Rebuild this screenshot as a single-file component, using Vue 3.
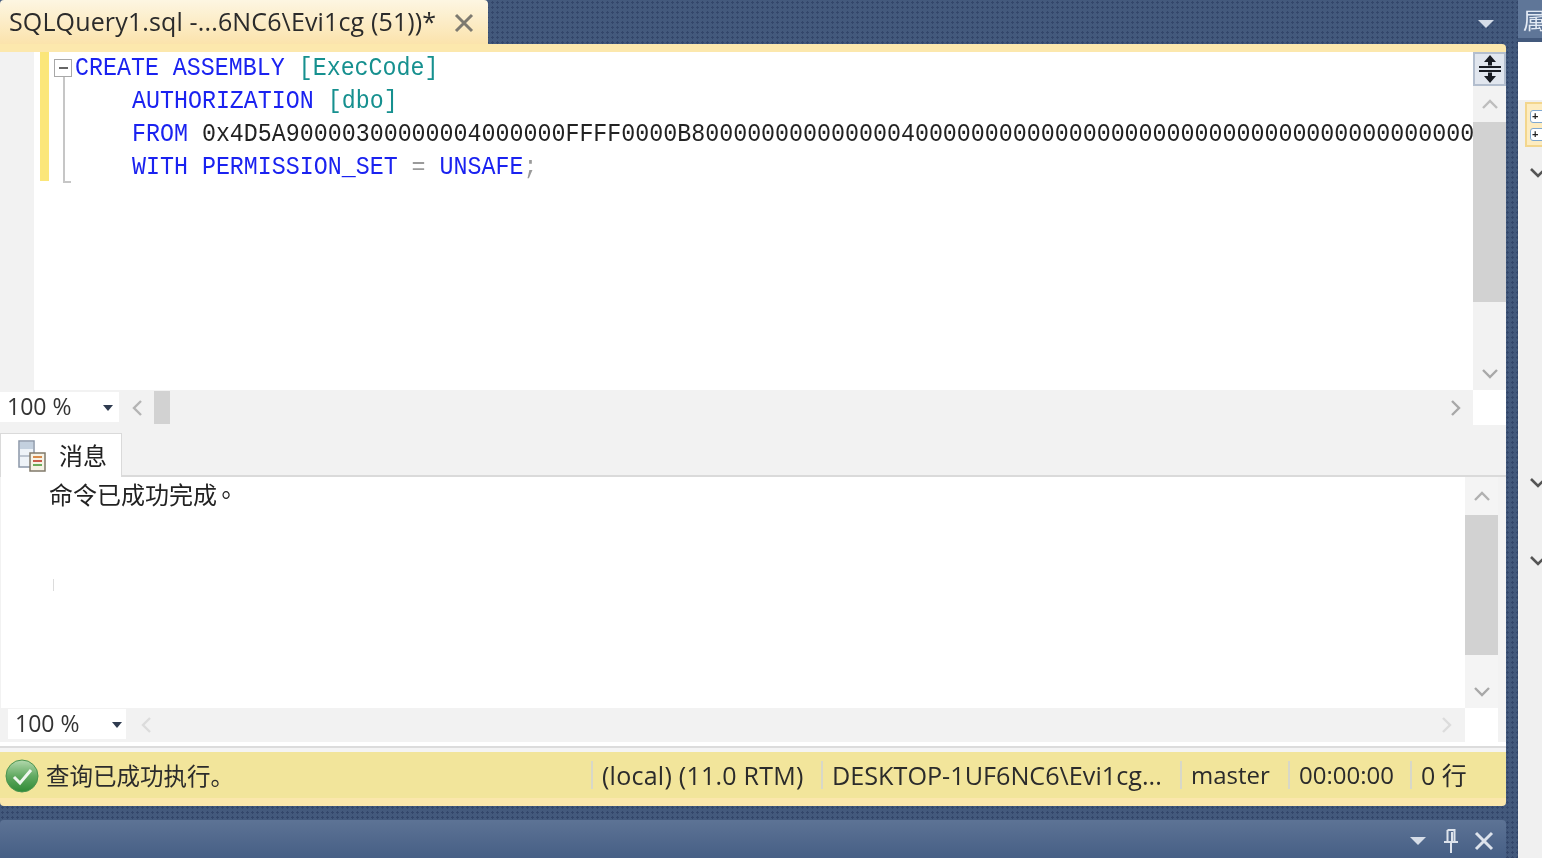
<script setup>
const hex = '0x4D5A90000300000004000000FFFF0000B800000000000000400000000000000000000000000000000000000000000000000000000000000000000000'
const statusCells = [
  { text: '(local) (11.0 RTM)', cls: 'c1' },
  { text: 'DESKTOP-1UF6NC6\\Evi1cg...', cls: 'c2' },
  { text: 'master', cls: 'c3' },
  { text: '00:00:00', cls: 'c4' },
  { text: '0 行', cls: 'c5' }
]
</script>

<template>
  <div class="app">
    <div class="main">
      <div class="tabstrip">
        <div class="tab">
          <span class="tabtext">SQLQuery1.sql -...6NC6\Evi1cg (51))*</span>
          <svg class="tabx" width="20" height="20" viewBox="0 0 20 20"><path d="M2 2L18 18M18 2L2 18" stroke="#7d7a70" stroke-width="3" fill="none"/></svg>
        </div>
        <svg class="droptri" width="16" height="8" viewBox="0 0 16 8"><path d="M0 0H16L8 8Z" fill="#d6dde8"/></svg>
      </div>
      <div class="goldbar"></div>

      <div class="editor">
        <div class="gutter"></div>
        <div class="change"></div>
        <div class="fold">
          <div class="foldbox"><span class="foldminus"></span></div>
          <div class="foldline"></div>
          <div class="foldfoot"></div>
        </div>
        <div class="code">
          <div class="ln"><span class="kw">CREATE ASSEMBLY </span><span class="id">[ExecCode]</span></div>
          <div class="ln ind"><span class="kw">AUTHORIZATION </span><span class="id">[dbo]</span></div>
          <div class="ln ind"><span class="kw">FROM </span><span class="bk">{{ hex }}</span></div>
          <div class="ln ind"><span class="kw">WITH PERMISSION_SET </span><span class="gr">=</span><span class="kw"> UNSAFE</span><span class="gr">;</span></div>
        </div>
        <div class="vbar">
          <div class="split">
            <svg width="26" height="28" viewBox="0 0 26 28"><path d="M13 0L7 7H11V10.5H15V7H19ZM13 28L7 21H11V17.5H15V21H19Z" fill="#181b22"/><path d="M2 12H24M2 16H24" stroke="#181b22" stroke-width="1.9" fill="none"/></svg>
          </div>
          <div class="arrow h36"><svg width="16" height="10" viewBox="0 0 16 10"><path d="M1 9L8 2L15 9" stroke="#bdbdbd" stroke-width="2.4" fill="none"/></svg></div>
          <div class="thumb t180"></div>
          <div class="vtrack"><svg width="16" height="10" viewBox="0 0 16 10"><path d="M1 1L8 8L15 1" stroke="#a8a8a8" stroke-width="2.4" fill="none"/></svg></div>
        </div>
      </div>

      <div class="hrow">
        <div class="zoom z1"><span>100 %</span><i class="ztri"></i></div>
        <div class="hbar">
          <svg class="hl" width="10" height="16" viewBox="0 0 10 16"><path d="M9 1L2 8L9 15" stroke="#b4b4b4" stroke-width="2.4" fill="none"/></svg>
          <div class="hthumb"></div>
          <svg class="hr" width="10" height="16" viewBox="0 0 10 16"><path d="M1 1L8 8L1 15" stroke="#a8a8a8" stroke-width="2.4" fill="none"/></svg>
        </div>
        <div class="corner"></div>
      </div>

      <div class="gap8"></div>

      <div class="rtabs">
        <div class="rtab">
          <svg width="30" height="32" viewBox="0 0 30 32">
            <rect x="2" y="1" width="15" height="26" fill="#eef3f8" stroke="#8b97a8" stroke-width="1.5"/>
            <rect x="3" y="2" width="13" height="7" fill="#c3d0de"/>
            <path d="M3 16H16" stroke="#8b97a8"/>
            <rect x="13" y="13" width="15" height="18" fill="#f6f3e6" stroke="#80796a" stroke-width="1.5"/>
            <path d="M16 17H25" stroke="#d88b4a" stroke-width="2"/><path d="M16 21H25" stroke="#c95b4b" stroke-width="2"/><path d="M16 25H25" stroke="#6bab5a" stroke-width="2"/>
          </svg>
          <span class="rtabtext">消息</span>
        </div>
      </div>

      <div class="msgs">
        <div class="msgbody">
          <div class="msgtext">命令已成功完成<span class="dot">。</span></div>
          <div class="tick"></div>
        </div>
        <div class="vbar2">
          <div class="arrow h38"><svg width="16" height="10" viewBox="0 0 16 10"><path d="M1 9L8 2L15 9" stroke="#b0b0b0" stroke-width="2.4" fill="none"/></svg></div>
          <div class="thumb t140"></div>
          <div class="vtrack"><svg width="16" height="10" viewBox="0 0 16 10"><path d="M1 1L8 8L15 1" stroke="#a8a8a8" stroke-width="2.4" fill="none"/></svg></div>
        </div>
      </div>

      <div class="mrow">
        <div class="zoom z2"><span>100 %</span><i class="ztri"></i></div>
        <div class="mbar">
          <svg width="10" height="16" viewBox="0 0 10 16"><path d="M9 1L2 8L9 15" stroke="#dcdcdc" stroke-width="2.4" fill="none"/></svg>
          <svg width="10" height="16" viewBox="0 0 10 16"><path d="M1 1L8 8L1 15" stroke="#dcdcdc" stroke-width="2.4" fill="none"/></svg>
        </div>
        <div class="mcorner"></div>
      </div>
      <div class="gap10"></div>

      <div class="status">
        <svg class="ok" width="34" height="34" viewBox="0 0 34 34">
          <defs><linearGradient id="okg" x1="0" y1="0" x2="0" y2="1"><stop offset="0" stop-color="#b4d9ae"/><stop offset="0.5" stop-color="#62aa62"/><stop offset="1" stop-color="#2f8a35"/></linearGradient></defs>
          <circle cx="17" cy="17" r="16" fill="url(#okg)" stroke="#4a9450"/>
          <path d="M9 18L15 24L26 11" stroke="#eef6ee" stroke-width="3" fill="none"/>
        </svg>
        <span class="stmsg">查询已成功执行。</span>
        <span v-for="c in statusCells" :key="c.cls" class="cell" :class="c.cls">{{ c.text }}</span>
      </div>

      <div class="gap14"></div>

      <div class="bottom">
        <svg class="bt" width="16" height="8" viewBox="0 0 16 8"><path d="M0 0H16L8 8Z" fill="#d6dde8"/></svg>
        <svg width="16" height="24" viewBox="0 0 16 24"><path d="M4.5 1H11.5V13M4.5 1V13M1 13H15M8 13V24M9 3V13" stroke="#dde3ec" stroke-width="2" fill="none"/></svg>
        <svg width="20" height="20" viewBox="0 0 20 20"><path d="M2 2L18 18M18 2L2 18" stroke="#dde3ec" stroke-width="3" fill="none"/></svg>
      </div>
    </div>

    <div class="side">
      <div class="sidetop"><span class="sidetitle">属</span></div>
      <div class="sidewhite"><span class="sideglyph">⋮</span></div>
      <div class="sidetoolwrap">
        <div class="sidetool">
          <span class="sq">+</span>
          <span class="sq">+</span>
        </div>
      </div>
      <div class="chev c173"><svg width="16" height="10" viewBox="0 0 16 10"><path d="M1 1L8 8L15 1" stroke="#555" stroke-width="2.6" fill="none"/></svg></div>
      <div class="chev c483"><svg width="16" height="10" viewBox="0 0 16 10"><path d="M1 1L8 8L15 1" stroke="#555" stroke-width="2.6" fill="none"/></svg></div>
      <div class="chev c561"><svg width="16" height="10" viewBox="0 0 16 10"><path d="M1 1L8 8L15 1" stroke="#555" stroke-width="2.6" fill="none"/></svg></div>
    </div>
  </div>
</template>

<style scoped>
.app {
  width: 1542px;
  height: 858px;
  display: flex;
  overflow: hidden;
  background-color: #43597c;
  background-image: radial-gradient(#33466a 1px, transparent 1.2px);
  background-size: 5px 5px;
  font-family: "Open Sans", "Noto Sans CJK SC", sans-serif;
  filter: blur(0.45px);
}
.main {
  width: 1506px;
  margin-right: 12px;
  display: flex;
  flex-direction: column;
  flex: none;
}
.tabstrip {
  height: 44px;
  display: flex;
  align-items: center;
  justify-content: space-between;
}
.tab {
  width: 488px;
  height: 44px;
  box-sizing: border-box;
  padding: 0 14px 0 9px;
  display: flex;
  align-items: center;
  justify-content: space-between;
  background: linear-gradient(#fdf6e2, #fbe3ac);
  border-radius: 4px 4px 0 0;
}
.tabtext {
  font-size: 25px;
  color: #2b2b2b;
  white-space: nowrap;
  letter-spacing: 0.14px;
  margin-top: -3px;
}
.tabx { flex: none; margin-top: 2px; }
.droptri { margin-right: 12px; margin-top: 4px; }
.goldbar {
  height: 8px;
  background: #fce8ad;
  border-radius: 0 4px 0 0;
}
.editor {
  height: 338px;
  display: flex;
  background: #fff;
}
.gutter {
  width: 34px;
  background: #f2f2f2;
  flex: none;
}
.change {
  width: 9px;
  height: 129px;
  margin-left: 6px;
  background: #fbe67a;
  flex: none;
}
.fold {
  width: 26px;
  flex: none;
  display: flex;
  flex-direction: column;
  align-items: flex-start;
  padding: 7px 0 0 5px;
  box-sizing: border-box;
}
.foldbox {
  width: 18px;
  height: 18px;
  border: 1.5px solid #a8a8a8;
  box-sizing: border-box;
  display: flex;
  align-items: center;
  justify-content: center;
  flex: none;
}
.foldminus {
  width: 9px;
  height: 2px;
  background: #666;
}
.foldline {
  width: 2px;
  height: 104px;
  margin-left: 9px;
  background: #c6c6c6;
}
.foldfoot {
  width: 8px;
  height: 2px;
  margin-left: 9px;
  background: #c6c6c6;
}
.code {
  flex: 1;
  min-width: 0;
  overflow: hidden;
  font-family: "Liberation Mono", monospace;
  font-size: 23.3px;
  line-height: 33px;
  white-space: pre;
}
.ln { height: 33px; transform: scaleY(1.14); }
.ind { padding-left: 57px; }
.kw { color: #1a22f0; }
.id { color: #16908f; }
.bk { color: #222; }
.gr { color: #9a9a9a; }
.vbar {
  width: 33px;
  flex: none;
  display: flex;
  flex-direction: column;
  background: #f2f2f2;
}
.split {
  height: 34px;
  box-sizing: border-box;
  background: #e1e6ee;
  border: 2px solid #b3bece;
  display: flex;
  align-items: center;
  justify-content: center;
  flex: none;
}
.arrow {
  display: flex;
  align-items: center;
  justify-content: center;
  flex: none;
}
.h36 { height: 36px; }
.h38 { height: 38px; }
.thumb { background: #d2d2d2; flex: none; }
.t180 { height: 180px; }
.t140 { height: 140px; }
.vtrack {
  flex: 1;
  display: flex;
  align-items: flex-end;
  justify-content: center;
  padding-bottom: 11px;
}
.hrow {
  height: 35px;
  display: flex;
  background: #f2f2f2;
}
.zoom {
  background: #fff;
  box-sizing: border-box;
  display: flex;
  align-items: center;
  justify-content: space-between;
  font-size: 23px;
  color: #333;
  flex: none;
}
.zoom span { margin-top: -2px; }
.z1 {
  width: 119px;
  height: 30px;
  margin-top: 2px;
  padding: 0 6px 0 7px;
}
.z2 {
  width: 118px;
  height: 30px;
  margin: 1px 0 0 8px;
  padding: 0 4px 0 7px;
}
.ztri {
  width: 0;
  height: 0;
  border-left: 5.5px solid transparent;
  border-right: 5.5px solid transparent;
  border-top: 6px solid #2f3b4f;
  margin-top: 2px;
}
.hbar {
  flex: 1;
  display: flex;
  align-items: center;
  padding: 0 12px 0 13px;
}
.hthumb {
  width: 16px;
  height: 33px;
  margin-left: 12px;
  background: #d2d2d2;
}
.hr { margin-left: auto; }
.corner {
  width: 33px;
  background: #fff;
  flex: none;
}
.gap8 { height: 8px; background: #f2f2f2; }
.rtabs {
  height: 44px;
  display: flex;
  background: #f2f2f2;
  border-bottom: 2px solid #dadada;
  box-sizing: border-box;
}
.rtab {
  width: 122px;
  height: 44px;
  box-sizing: border-box;
  background: #fff;
  border: 1px solid #dadada;
  border-bottom: none;
  display: flex;
  align-items: center;
  padding-left: 16px;
  gap: 12px;
}
.rtabtext {
  font-size: 24px;
  color: #222;
  font-family: "Noto Sans CJK SC", sans-serif;
  margin-top: -2px;
}
.msgs {
  height: 231px;
  display: flex;
  background: #f2f2f2;
}
.msgbody {
  width: 1464px;
  margin-left: 1px;
  background: #fff;
  padding-left: 48px;
  box-sizing: border-box;
  flex: none;
}
.msgtext {
  font-family: "Noto Sans CJK SC", sans-serif;
  font-size: 24px;
  line-height: 34px;
  color: #222;
}
.dot { font-family: "Noto Sans CJK TC", sans-serif; margin-left: -3px; }
.tick {
  width: 1px;
  height: 12px;
  margin: 68px 0 0 4px;
  background: #dcdcdc;
}
.vbar2 {
  width: 33px;
  flex: none;
  display: flex;
  flex-direction: column;
  background: #f4f4f4;
}
.mrow {
  height: 34px;
  display: flex;
  background: #f2f2f2;
}
.mbar {
  width: 1339px;
  display: flex;
  align-items: center;
  justify-content: space-between;
  padding: 0 13px 0 15px;
  box-sizing: border-box;
  flex: none;
}
.mcorner {
  width: 33px;
  background: #fff;
  flex: none;
}
.gap10 {
  height: 10px;
  background: linear-gradient(#fff 0 4px, #dcdcdc 4px 6px, #f4f4f4 6px);
}
.status {
  height: 54px;
  box-sizing: border-box;
  display: flex;
  align-items: center;
  background: linear-gradient(#f2e59b 0 46px, #fbe7ac 46px);
  border-radius: 0 0 4px 4px;
  padding-left: 5px;
  font-size: 24px;
  color: #2b2b2b;
  padding-bottom: 8px;
}
.ok { flex: none; margin-top: 2px; }
.stmsg {
  width: 545px;
  margin-left: 7px;
  flex: none;
  font-family: "Noto Sans CJK SC", sans-serif;
  font-size: 23.5px;
}
.cell {
  box-sizing: border-box;
  height: 28px;
  line-height: 28px;
  border-left: 2px solid #d8d8c8;
  padding-left: 9px;
  white-space: nowrap;
  flex: none;
}
.c1 { width: 230px; font-size: 25px; letter-spacing: 0.25px; }
.c2 { width: 359px; font-size: 25.2px; }
.c3 { width: 108px; }
.c4 { width: 122px; }
.c5 { width: 90px; font-size: 25px; }
.gap14 { height: 14px; }
.bottom {
  height: 38px;
  display: flex;
  align-items: center;
  justify-content: flex-end;
  gap: 15px;
  padding: 4px 12px 0 0;
  box-sizing: border-box;
  background: linear-gradient(#5d7395, #465f85);
  border-radius: 4px 4px 0 0;
}
.bt { margin-right: 2px; }
.side {
  width: 24px;
  height: 858px;
  flex: none;
  background: #f0f0f0;
  overflow: hidden;
  display: flex;
  flex-direction: column;
}
.sidetop {
  height: 42px;
  background: linear-gradient(#5f7698 0 38px, #43597c 38px);
  overflow: hidden;
  white-space: nowrap;
  flex: none;
}
.sidetitle {
  font-family: "Noto Sans CJK SC", sans-serif;
  font-size: 23px;
  line-height: 38px;
  color: #e4ebf5;
  margin-left: 5px;
}
.sidewhite {
  height: 58px;
  background: #fff;
  flex: none;
  overflow: hidden;
}
.sideglyph {
  display: block;
  color: #b5682a;
  font-size: 28px;
  line-height: 58px;
  margin-left: 18px;
  font-family: "Liberation Sans", sans-serif;
}
.sidetoolwrap {
  height: 52px;
  box-sizing: border-box;
  padding: 2px 0 5px 7px;
  flex: none;
}
.sidetool {
  height: 45px;
  box-sizing: border-box;
  background: #fdecc0;
  border: 2px solid #f3d68d;
  border-right: none;
  padding: 6px 0 0 3px;
  display: flex;
  flex-direction: column;
  gap: 5px;
}
.sq {
  width: 20px;
  height: 13px;
  background: #fff;
  border: 1.5px solid #7fa8d0;
  border-radius: 3px;
  box-sizing: border-box;
  font-family: "Liberation Sans", sans-serif;
  font-size: 11px;
  font-weight: 700;
  line-height: 10px;
  padding-left: 1px;
  color: #222;
}
.chev { padding-left: 12px; line-height: 0; flex: none; }
.c173 { margin-top: 16px; }
.c483 { margin-top: 300px; }
.c561 { margin-top: 68px; }
</style>

<style>
html, body { margin: 0; padding: 0; overflow: hidden; }
</style>
